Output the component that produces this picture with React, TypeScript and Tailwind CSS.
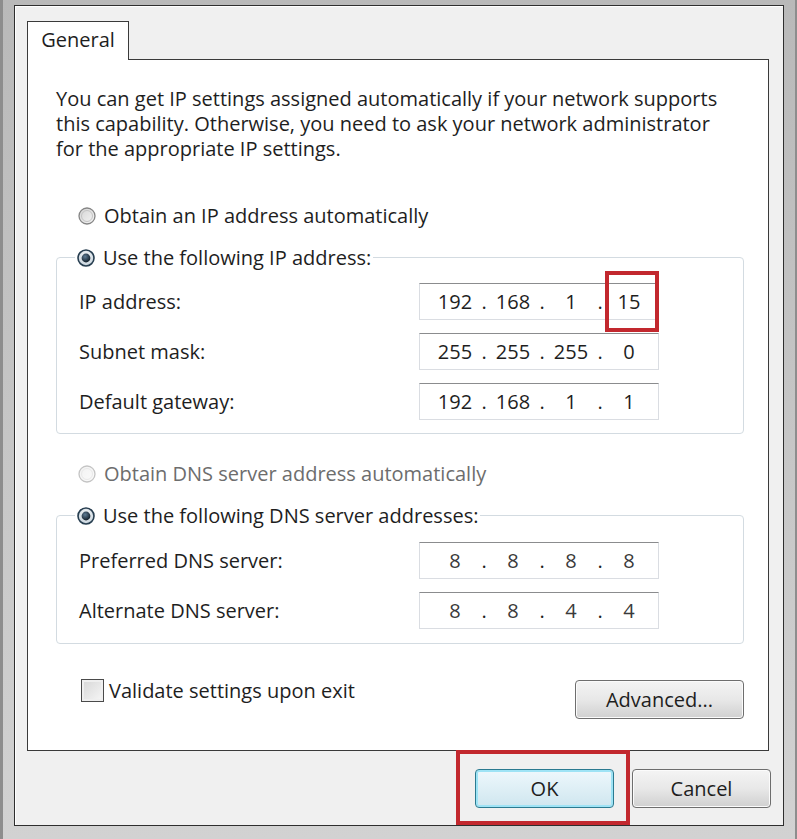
import React from 'react'

// Windows 7 "Internet Protocol Version 4 (TCP/IPv4) Properties" dialog

function Radio({ state }: { state: 'on' | 'off' | 'disabled' }) {
  if (state === 'on') {
    return (
      <svg width="18" height="18" viewBox="0 0 18 18" className="shrink-0">
        <defs>
          <radialGradient id="rOn" cx="50%" cy="40%" r="60%">
            <stop offset="0%" stopColor="#ffffff" />
            <stop offset="100%" stopColor="#c3d0da" />
          </radialGradient>
          <radialGradient id="dOn" cx="40%" cy="35%" r="70%">
            <stop offset="0%" stopColor="#5f7d96" />
            <stop offset="100%" stopColor="#0c1822" />
          </radialGradient>
        </defs>
        <circle cx="9" cy="9" r="8" fill="url(#rOn)" stroke="#263d4f" strokeWidth="1.6" />
        <circle cx="9" cy="9" r="4.4" fill="url(#dOn)" />
      </svg>
    )
  }
  const disabled = state === 'disabled'
  return (
    <svg width="18" height="18" viewBox="0 0 18 18" className="shrink-0">
      <defs>
        <linearGradient id={disabled ? 'rDis' : 'rOff'} x1="0" y1="0" x2="1" y2="1">
          <stop offset="0%" stopColor={disabled ? '#f2f2f2' : '#d4d4d4'} />
          <stop offset="100%" stopColor={disabled ? '#fbfbfb' : '#f6f6f6'} />
        </linearGradient>
      </defs>
      <circle
        cx="9"
        cy="9"
        r="8"
        fill={`url(#${disabled ? 'rDis' : 'rOff'})`}
        stroke={disabled ? '#c4c4c4' : '#858585'}
        strokeWidth="1.3"
      />
      <circle cx="9" cy="9" r="5.5" fill="none" stroke={disabled ? '#e9e9e9' : '#c4c4c4'} strokeWidth="1" />
    </svg>
  )
}

function IpBox({ parts, thin }: { parts: string[]; thin?: boolean }) {
  return (
    <div className="flex h-[37px] w-[240px] items-center border border-[#dadde2] border-t-[#8b8c8e] bg-white pl-[6px]">
      {parts.map((p, i) => (
        <React.Fragment key={i}>
          <span className={`flex-1 text-center ${thin ? 'text-[#3a3a3a]' : 'text-[#1e1e1e]'}`}>{p}</span>
          {i < 3 && <span className="flex w-0 justify-center">.</span>}
        </React.Fragment>
      ))}
    </div>
  )
}

function Row({ label, children }: { label: string; children: React.ReactNode }) {
  return (
    <div className="flex items-center justify-between pr-[84px]">
      <span>{label}</span>
      {children}
    </div>
  )
}

function Btn({ label, isDefault, wide }: { label: string; isDefault?: boolean; wide?: boolean }) {
  if (isDefault) {
    return (
      <div className="flex h-[39px] w-[139px] items-center justify-center rounded-[4px] border border-[#2b7a90] bg-gradient-to-b from-[#eef8fc] to-[#cfe6ef] shadow-[inset_0_0_0_2px_#9ee3f5]">
        {label}
      </div>
    )
  }
  return (
    <div
      className={`flex h-[39px] items-center justify-center rounded-[4px] border border-[#6e6e6e] bg-gradient-to-b from-[#f4f4f4] via-[#e8e8e8] to-[#d0d0d0] shadow-[inset_0_0_0_1px_#fbfbfb] ${
        wide ? 'w-[169px]' : 'w-[139px]'
      }`}
    >
      {label}
    </div>
  )
}

export default function App() {
  return (
    <div className="h-[839px] w-[797px] overflow-hidden border-l-[3px] border-r-[2px] border-[#8d8d8d] bg-gradient-to-b from-[#b9b9b9] to-[#d2d2d2] pb-[13px] pl-[11px] pr-[11px] pt-[5px] font-['Open_Sans',sans-serif] text-[20px] leading-[25px] text-[#1e1e1e]">
      <div className="flex h-full flex-col border border-[#2e2e2e] bg-[#f0f0f0] shadow-[inset_1px_1px_0_#ffffff]">
        {/* tab strip */}
        <div className="flex pl-[12px] pt-[15px]">
          <div className="relative z-10 -mb-px flex h-[39px] w-[102px] items-center justify-center border border-b-0 border-[#3a3a3a] bg-white pb-[4px]">
            General
          </div>
        </div>

        {/* tab page */}
        <div className="mr-[14px] ml-[12px] flex h-[692px] flex-col border border-[#3a3a3a] bg-white pl-[28px] pr-[24px] pt-[26px]">
          <p className="whitespace-nowrap">
            You can get IP settings assigned automatically if your network supports
            <br />
            this capability. Otherwise, you need to ask your network administrator
            <br />
            for the appropriate IP settings.
          </p>

          <div className="mt-[42px] flex items-center gap-[8px] pl-[22px]">
            <Radio state="off" />
            <span>Obtain an IP address automatically</span>
          </div>

          <fieldset className="mt-[17px] rounded-[4px] border border-[#d3dbe1] pb-[13px] pl-[22px]">
            <legend className="-ml-[4px] flex items-center gap-[8px] px-[2px]">
              <Radio state="on" />
              <span>Use the following IP address:</span>
            </legend>
            <div className="mt-[13px] flex flex-col gap-[13px]">
              <Row label="IP address:">
                <div className="relative">
                  <IpBox parts={['192', '168', '1', '15']} />
                  <div className="absolute -bottom-[12px] -top-[12px] left-[186px] right-0 border-[4px] border-[#c2282e]" />
                </div>
              </Row>
              <Row label="Subnet mask:">
                <IpBox parts={['255', '255', '255', '0']} />
              </Row>
              <Row label="Default gateway:">
                <IpBox parts={['192', '168', '1', '1']} />
              </Row>
            </div>
          </fieldset>

          <div className="mt-[27px] flex items-center gap-[8px] pl-[22px] text-[#6d6d6d]">
            <Radio state="disabled" />
            <span>Obtain DNS server address automatically</span>
          </div>

          <fieldset className="mt-[17px] rounded-[4px] border border-[#d3dbe1] pb-[14px] pl-[22px]">
            <legend className="-ml-[4px] flex items-center gap-[8px] px-[2px]">
              <Radio state="on" />
              <span>Use the following DNS server addresses:</span>
            </legend>
            <div className="mt-[14px] flex flex-col gap-[13px]">
              <Row label="Preferred DNS server:">
                <IpBox parts={['8', '8', '8', '8']} thin />
              </Row>
              <Row label="Alternate DNS server:">
                <IpBox parts={['8', '8', '4', '4']} thin />
              </Row>
            </div>
          </fieldset>

          <div className="mt-[34px] flex items-start justify-between">
            <div className="flex items-center gap-[5px] pl-[25px]">
              <div className="h-[23px] w-[23px] border border-[#4a4a4a] bg-gradient-to-br from-[#d6d6d6] to-[#f7f7f7] shadow-[inset_0_0_0_2px_#efefef]" />
              <span>Validate settings upon exit</span>
            </div>
            <div className="mt-[2px]">
              <Btn label="Advanced..." wide />
            </div>
          </div>
        </div>

        {/* dialog buttons */}
        <div className="flex justify-end gap-[18px] pr-[12px] pt-[18px]">
          <div className="relative">
            <Btn label="OK" isDefault />
            <div className="absolute -bottom-[17px] -left-[19px] -right-[16px] -top-[19px] border-[4px] border-[#c2282e]" />
          </div>
          <Btn label="Cancel" />
        </div>
      </div>
    </div>
  )
}
